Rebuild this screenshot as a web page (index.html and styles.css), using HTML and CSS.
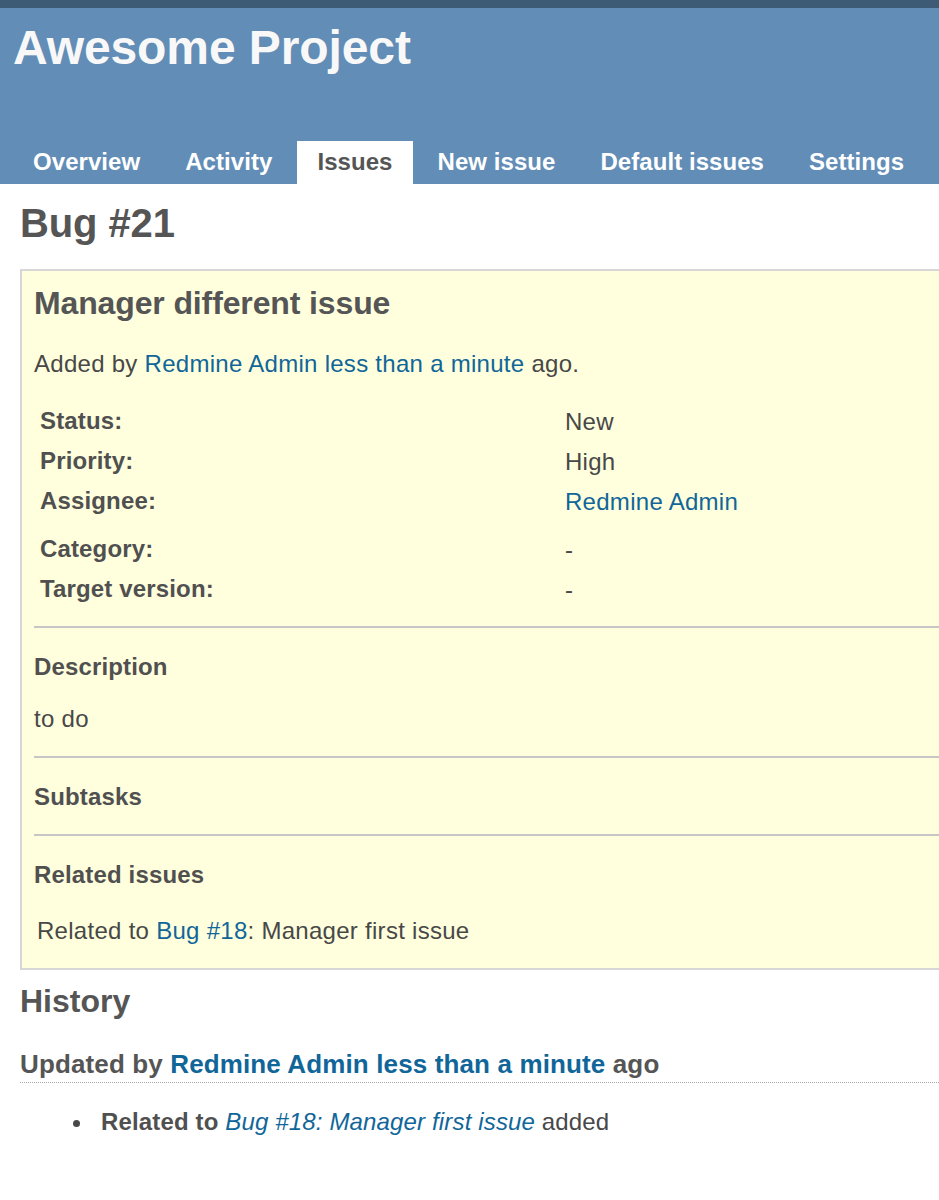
FILE: index.html
```html
<!DOCTYPE html>
<html lang="en">
<head>
<meta charset="utf-8">
<title>Bug #21 - Awesome Project</title>
<link rel="stylesheet" href="styles.css">
</head>
<body>
<div class="topbar"></div>
<header class="header">
  <h1 class="title">Awesome Project</h1>
  <nav class="menu">
    <a class="tab" href="#">Overview</a>
    <a class="tab" href="#">Activity</a>
    <a class="tab selected" href="#">Issues</a>
    <a class="tab" href="#">New issue</a>
    <a class="tab" href="#">Default issues</a>
    <a class="tab" href="#">Settings</a>
  </nav>
</header>
<main class="content">
  <h2 class="page-title">Bug #21</h2>
  <div class="issue">
    <h3 class="subject">Manager different issue</h3>
    <p class="author">Added by <a href="#">Redmine Admin</a> <a href="#">less than a minute</a> ago.</p>
    <div class="attributes">
      <div class="label">Status:</div><div class="value">New</div>
      <div class="label">Priority:</div><div class="value">High</div>
      <div class="label tall">Assignee:</div><div class="value tall"><a href="#">Redmine Admin</a></div>
      <div class="label">Category:</div><div class="value">-</div>
      <div class="label">Target version:</div><div class="value">-</div>
    </div>
    <hr class="sep">
    <p class="section-title">Description</p>
    <p class="desc">to do</p>
    <hr class="sep">
    <p class="section-title">Subtasks</p>
    <hr class="sep">
    <p class="section-title">Related issues</p>
    <div class="relation">Related to <a href="#">Bug #18</a>: Manager first issue</div>
  </div>
  <h3 class="history-title">History</h3>
  <div class="journal">
    <h4 class="journal-head">Updated by <a href="#">Redmine Admin</a> <a href="#">less than a minute</a> ago</h4>
    <ul class="details">
      <li><strong>Related to</strong> <a href="#"><em>Bug #18: Manager first issue</em></a> added</li>
    </ul>
  </div>
</main>
</body>
</html>
```
FILE: styles.css
```css
html, body {
  margin: 0;
  padding: 0;
  overflow-x: hidden;
}

body {
  font-family: "Liberation Sans", Arial, sans-serif;
  font-size: 24px;
  line-height: 27px;
  letter-spacing: 0.28px;
  color: #484848;
  background: #ffffff;
}

a {
  color: #116699;
  text-decoration: none;
}

.topbar {
  height: 8px;
  background: #3e5b76;
}

.header {
  height: 176px;
  box-sizing: border-box;
  background: #628db6;
  color: #f8f8f8;
  padding: 12px 0 0 13px;
  display: flex;
  flex-direction: column;
  justify-content: space-between;
}

.title {
  margin: 0;
  font-size: 48px;
  line-height: 55px;
  font-weight: bold;
  letter-spacing: -0.1px;
  color: #f8f8f8;
}

.menu {
  display: flex;
}

.tab {
  display: block;
  padding: 7px 20px 9px;
  margin-right: 5px;
  font-weight: bold;
  font-size: 24px;
  line-height: 27px;
  letter-spacing: 0.06px;
  color: #ffffff;
}

.tab.selected {
  background: #ffffff;
  color: #555555;
}

.content {
  padding: 16px 0 40px 20px;
}

.page-title {
  margin: 0 0 23px;
  font-size: 40px;
  line-height: 46px;
  font-weight: bold;
  letter-spacing: -0.1px;
  color: #555555;
}

.issue {
  background: #ffffdd;
  border: 2px solid #d7d7d7;
  border-right: none;
  padding: 14px 0 24px 12px;
}

.subject {
  margin: 0;
  font-size: 32px;
  line-height: 37px;
  font-weight: bold;
  letter-spacing: -0.13px;
  color: #555555;
}

.author {
  margin: 28px 0 0;
}

.attributes {
  margin-top: 30px;
  padding-left: 6px;
  display: grid;
  grid-template-columns: 525px 1fr;
  row-gap: 13px;
}

.label {
  font-weight: bold;
  letter-spacing: 0.15px;
  color: #505050;
}

.value {
  position: relative;
  top: 1px;
}

.tall {
  padding-bottom: 8px;
}

.sep {
  margin: 24px 0 0;
  border: none;
  border-top: 2px solid #c6c6c6;
  height: 0;
}

.section-title {
  margin: 25px 0 0;
  font-weight: bold;
  letter-spacing: 0.15px;
  color: #505050;
}

.desc {
  margin: 25px 0 0;
}

.relation {
  margin-top: 29px;
  padding-left: 3px;
}

.history-title {
  margin: 13px 0 0;
  font-size: 32px;
  line-height: 37px;
  font-weight: bold;
  letter-spacing: 0;
  color: #555555;
}

.journal-head {
  margin: 29px 0 0;
  font-size: 26px;
  line-height: 30px;
  font-weight: bold;
  letter-spacing: 0.13px;
  color: #555555;
  padding-bottom: 3px;
  border-bottom: 1px dotted #aaaaaa;
}

.details {
  margin: 25px 0 0;
  padding-left: 81px;
  list-style: none;
  letter-spacing: 0.15px;
}

.details li::before {
  content: "";
  display: inline-block;
  width: 7px;
  height: 7px;
  border-radius: 50%;
  background: #484848;
  margin-left: -28.5px;
  margin-right: 21.5px;
  vertical-align: middle;
}

.details strong {
  color: #505050;
}
```
